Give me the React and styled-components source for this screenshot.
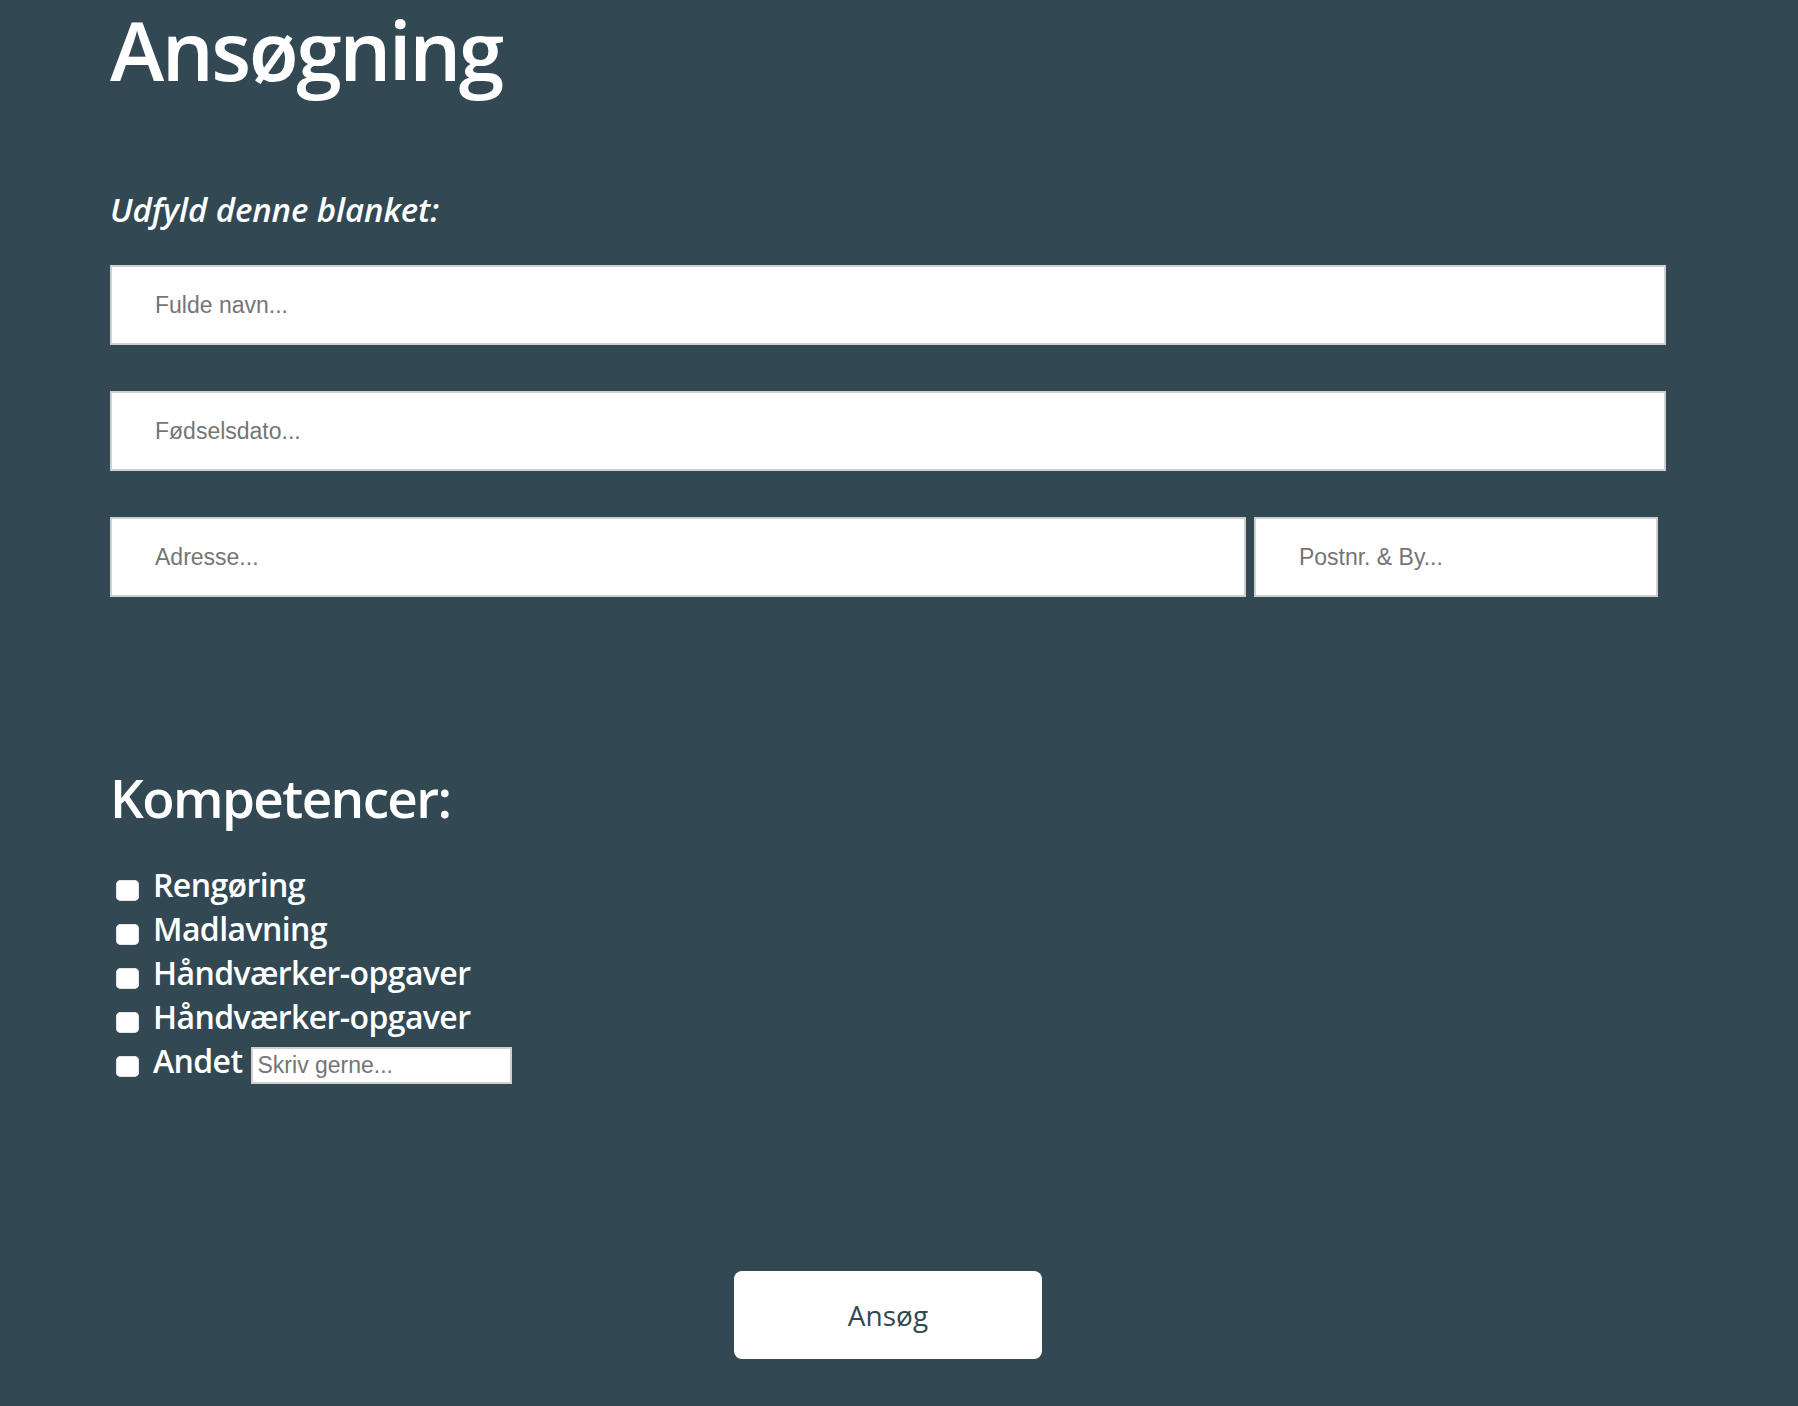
import React from "react";
import styled, { createGlobalStyle } from "styled-components";

const GlobalStyle = createGlobalStyle`
  html, body {
    margin: 0;
    background: #324954;
    min-height: 100%;
  }
  body {
    font-family: "Open Sans", "Liberation Sans", sans-serif;
    color: #ffffff;
  }
`;

const Page = styled.div`
  padding: 0 0 48px 110px;
  min-height: 1406px;
  box-sizing: border-box;
`;

const Container = styled.div`
  width: 1556px;
  display: flex;
  flex-direction: column;
`;

const Title = styled.h1`
  margin: 0;
  font-size: 82px;
  font-weight: 600;
  line-height: 1.2;
  letter-spacing: -2.5px;
`;

const Intro = styled.p`
  margin: 89px 0 33px 0;
  font-size: 33px;
  font-style: italic;
  font-weight: 600;
  line-height: normal;
  letter-spacing: -0.1px;
`;

const Fields = styled.div`
  display: flex;
  flex-direction: column;
  gap: 46px;
`;

const Row = styled.div`
  display: flex;
  gap: 8px;
`;

const TextField = styled.input`
  box-sizing: border-box;
  width: ${(p) => p.$width || "100%"};
  height: 80px;
  padding: 0 0 0 43px;
  border: 2px solid #cfcfcf;
  background: #ffffff;
  font-family: "Liberation Sans", Arial, sans-serif;
  font-size: 23px;
  color: #333;
  outline: none;

  &::placeholder {
    color: #757575;
  }
`;

const SectionTitle = styled.h2`
  margin: 164px 0 29px 0;
  font-size: 53px;
  font-weight: 600;
  line-height: normal;
  letter-spacing: -1.6px;
`;

const Checklist = styled.div`
  display: flex;
  flex-direction: column;
`;

const CheckRow = styled.label`
  display: flex;
  align-items: flex-start;
  height: 44px;
  font-size: 32px;
  font-weight: 600;
  line-height: 44px;
  letter-spacing: -0.6px;
`;

const Box = styled.input.attrs({ type: "checkbox" })`
  appearance: none;
  -webkit-appearance: none;
  flex: none;
  width: 23px;
  height: 21px;
  margin: 17px 14px 0 6px;
  border-radius: 5px;
  background: #ffffff;
  border: none;
  box-shadow: inset 0 0 0 1px #e4e4e4;
`;

const OtherField = styled.input`
  box-sizing: border-box;
  width: 261px;
  height: 37px;
  margin: 8px 0 0 8px;
  padding: 0 0 0 5px;
  border: 2px solid #cfcfcf;
  background: #ffffff;
  font-family: "Liberation Sans", Arial, sans-serif;
  font-size: 23px;
  letter-spacing: 0;
  outline: none;

  &::placeholder {
    color: #757575;
  }
`;

const Submit = styled.button`
  align-self: center;
  margin-top: 188px;
  width: 308px;
  height: 88px;
  border: none;
  border-radius: 8px;
  background: #ffffff;
  color: #324954;
  font-family: "Open Sans", "Liberation Sans", sans-serif;
  font-size: 28px;
  font-weight: 500;
  cursor: pointer;
`;

const skills = ["Rengøring", "Madlavning", "Håndværker-opgaver", "Håndværker-opgaver"];

export default function App() {
  return (
    <>
      <GlobalStyle />
      <Page>
        <Container>
          <Title>Ansøgning</Title>
          <Intro>Udfyld denne blanket:</Intro>
          <Fields>
            <TextField placeholder="Fulde navn..." />
            <TextField placeholder="Fødselsdato..." />
            <Row>
              <TextField $width="73%" placeholder="Adresse..." />
              <TextField $width="26%" placeholder="Postnr. & By..." />
            </Row>
          </Fields>
          <SectionTitle>Kompetencer:</SectionTitle>
          <Checklist>
            {skills.map((s, i) => (
              <CheckRow key={i}>
                <Box />
                {s}
              </CheckRow>
            ))}
            <CheckRow>
              <Box />
              Andet
              <OtherField placeholder="Skriv gerne..." />
            </CheckRow>
          </Checklist>
          <Submit>Ansøg</Submit>
        </Container>
      </Page>
    </>
  );
}
